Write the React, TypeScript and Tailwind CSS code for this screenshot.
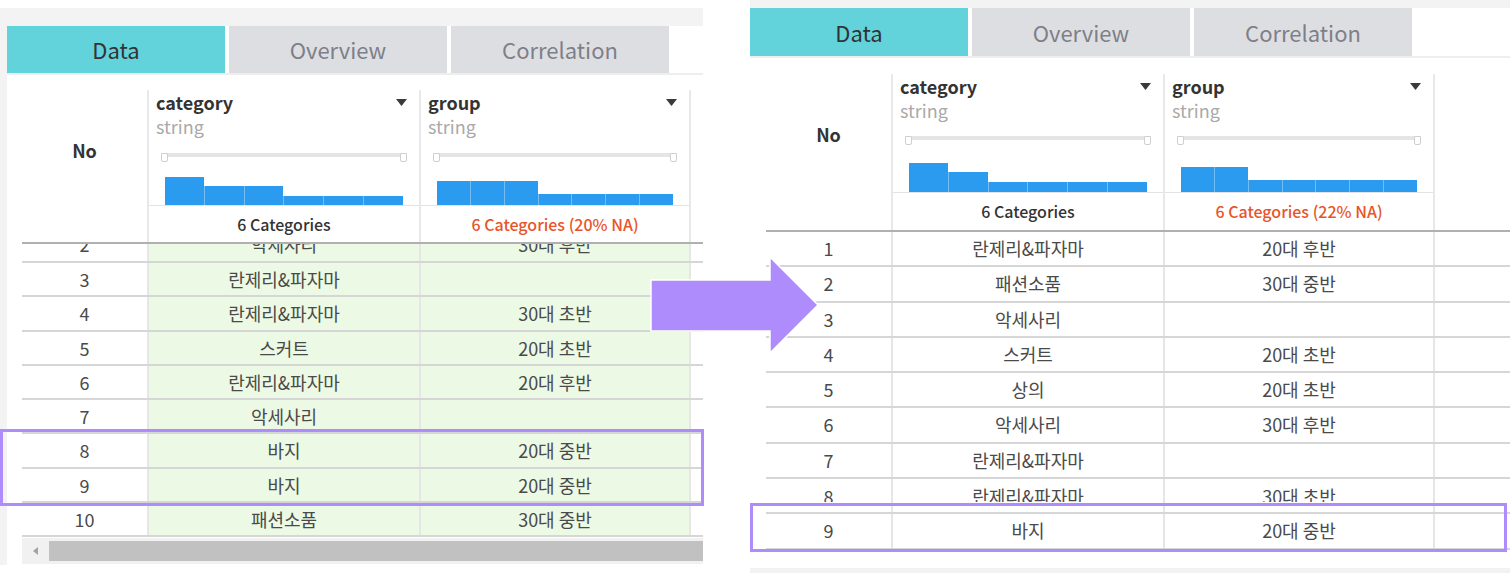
type Row = { no: number; cat: string; grp: string; clip?: 'top' | 'bottom' };

type Cfg = {
  headerH: string;
  colsTop: string;
  colsH: string;
  noPad: string;
  sliderMt: string;
  histH: string;
  statH: string;
  rowH: string;
  lead: string;
};

const leftCfg: Cfg = {
  headerH: 'h-[169px]',
  colsTop: 'mt-[15px]',
  colsH: 'h-[152px]',
  noPad: 'pt-[63px]',
  sliderMt: 'mt-[15px]',
  histH: 'h-[43px]',
  statH: 'h-[36px]',
  rowH: 'h-[34.25px]',
  lead: 'leading-[32px]',
};

const rightCfg: Cfg = {
  headerH: 'h-[174px]',
  colsTop: 'mt-[16px]',
  colsH: 'h-[156px]',
  noPad: 'pt-[64px]',
  sliderMt: 'mt-[14px]',
  histH: 'h-[47px]',
  statH: 'h-[37px]',
  rowH: 'h-[35.3px]',
  lead: 'leading-[33px]',
};

const leftRows: Row[] = [
  { no: 2, cat: '악세사리', grp: '30대 후반', clip: 'top' },
  { no: 3, cat: '란제리&파자마', grp: '' },
  { no: 4, cat: '란제리&파자마', grp: '30대 초반' },
  { no: 5, cat: '스커트', grp: '20대 초반' },
  { no: 6, cat: '란제리&파자마', grp: '20대 후반' },
  { no: 7, cat: '악세사리', grp: '' },
  { no: 8, cat: '바지', grp: '20대 중반' },
  { no: 9, cat: '바지', grp: '20대 중반' },
  { no: 10, cat: '패션소품', grp: '30대 중반' },
];

const rightRows: Row[] = [
  { no: 1, cat: '란제리&파자마', grp: '20대 후반' },
  { no: 2, cat: '패션소품', grp: '30대 중반' },
  { no: 3, cat: '악세사리', grp: '' },
  { no: 4, cat: '스커트', grp: '20대 초반' },
  { no: 5, cat: '상의', grp: '20대 초반' },
  { no: 6, cat: '악세사리', grp: '30대 후반' },
  { no: 7, cat: '란제리&파자마', grp: '' },
  { no: 8, cat: '란제리&파자마', grp: '30대 초반', clip: 'bottom' },
  { no: 9, cat: '바지', grp: '20대 중반' },
];

function Caret() {
  return (
    <svg width="11" height="7" viewBox="0 0 11 7">
      <path d="M0 0h11L5.5 7z" fill="#3a3a3a" />
    </svg>
  );
}

function Slider() {
  return (
    <div className="flex items-start px-[12px]">
      <div className="w-[7px] h-[9px] rounded-b-[2px] border border-[#cfcfcf] bg-white" />
      <div className="flex-1 h-[4px] bg-[#e5e5e5]" />
      <div className="w-[7px] h-[9px] rounded-b-[2px] border border-[#cfcfcf] bg-white" />
    </div>
  );
}

function Histogram({ heights, h }: { heights: number[]; h: string }) {
  return (
    <div className={`flex items-end px-[16px] ${h}`}>
      {heights.map((v, i) => (
        <div
          key={i}
          className={`flex-1 bg-[#2b9bef] ${i > 0 ? 'border-l border-[#72bdf4]' : ''}`}
          style={{ height: v }}
        />
      ))}
    </div>
  );
}

function ColHeader({ name, stat, na, heights, cfg, last }: { name: string; stat: string; na?: boolean; heights: number[]; cfg: Cfg; last?: boolean }) {
  return (
    <div className={`w-[272px] flex flex-col border-l-2 border-[#e8e8e8] ${last ? 'border-r-2' : ''} ${cfg.colsTop} ${cfg.colsH}`}>
      <div className="flex items-center justify-between pl-[7px] pr-[12px] h-[24px] text-[18px] font-bold text-[#333]">
        <span>{name}</span>
        <Caret />
      </div>
      <div className="pl-[7px] h-[24px] leading-[24px] text-[18px] text-[#a9a9a9]">string</div>
      <div className={cfg.sliderMt}>
        <Slider />
      </div>
      <Histogram heights={heights} h={cfg.histH} />
      <div className={`border-t border-[#e3e3e3] flex items-center justify-center text-[16px] font-medium ${cfg.statH} ${na ? 'text-[#e8552a]' : 'text-[#333]'}`}>
        {stat}
      </div>
    </div>
  );
}

function BodyRow({ row, cfg, green }: { row: Row; cfg: Cfg; green: boolean }) {
  const bg = green ? 'bg-[#ecf9e4]' : 'bg-white';
  const text = (t: string) => {
    if (row.clip === 'top') return <div className="-mt-[17px] leading-[34px]">{t}</div>;
    if (row.clip === 'bottom') return <div className="h-[23px] overflow-hidden leading-[35px]">{t}</div>;
    return <div className={cfg.lead}>{t}</div>;
  };
  const h = row.clip === 'top' ? 'h-[19px]' : cfg.rowH;
  return (
    <div className={`flex border-b-2 border-[#d6d6d6] text-[18px] text-[#4a4a4a] ${h}`}>
      <div className="w-[125px] overflow-hidden text-center">{text(String(row.no))}</div>
      <div className={`w-[272px] overflow-hidden text-center border-l-2 border-[#e6e6e6] ${bg}`}>{text(row.cat)}</div>
      <div className={`w-[272px] overflow-hidden text-center border-l-2 border-r-2 border-[#e6e6e6] ${bg}`}>{text(row.grp)}</div>
      <div className="flex-1" />
    </div>
  );
}

function Tabs({ h }: { h: string }) {
  return (
    <div className={`flex gap-[4px] border-b-2 border-[#eeeeee] text-[22px] ${h}`}>
      <div className="w-[218px] bg-[#62d2db] flex items-center justify-center text-[#333]">Data</div>
      <div className="w-[218px] bg-[#dddee2] flex items-center justify-center text-[#7e7f88]">Overview</div>
      <div className="w-[218px] bg-[#dddee2] flex items-center justify-center text-[#7e7f88]">Correlation</div>
    </div>
  );
}

function Table({ cfg, rows, green, catBars, grpBars, na }: { cfg: Cfg; rows: Row[]; green: boolean; catBars: number[]; grpBars: number[]; na: string }) {
  return (
    <div>
      <div className={`flex items-start border-b-2 border-[#b0b0b0] ${cfg.headerH}`}>
        <div className={`w-[125px] text-center text-[18px] font-bold text-[#333] leading-[24px] ${cfg.noPad}`}>No</div>
        <ColHeader name="category" stat="6 Categories" heights={catBars} cfg={cfg} />
        <ColHeader name="group" stat={na} na heights={grpBars} cfg={cfg} last />
      </div>
      {rows.map((r) => (
        <BodyRow key={r.no} row={r} cfg={cfg} green={green} />
      ))}
    </div>
  );
}

export default function App() {
  return (
    <div className="relative w-[1510px] h-[573px] overflow-hidden bg-white flex items-start font-['Noto_Sans_CJK_KR','Noto_Sans',sans-serif]">
      {/* before */}
      <div className="w-[703px] pt-[8px]">
        <div className="bg-[#f3f3f3] pt-[18px] pl-[7px] h-[557px]">
          <div className="bg-white h-full">
            <Tabs h="h-[49px]" />
            <div className="pl-[15px]">
              <Table
                cfg={leftCfg}
                rows={leftRows}
                green
                catBars={[28, 19, 19, 9, 9, 9]}
                grpBars={[24, 24, 24, 11, 11, 11, 11]}
                na="6 Categories (20% NA)"
              />
              <div className="mt-[1px] h-[26px] bg-[#f1f1f1] flex items-center">
                <div className="w-[27px] flex justify-center">
                  <svg width="5" height="8" viewBox="0 0 5 8">
                    <path d="M5 0v8L0 4z" fill="#a3a3a3" />
                  </svg>
                </div>
                <div className="flex-1 h-[20px] bg-[#c1c1c1]" />
              </div>
            </div>
          </div>
        </div>
      </div>

      {/* after */}
      <div className="w-[760px] ml-[47px]">
        <div className="h-[8px] bg-[#f3f3f3]" />
        <Tabs h="h-[50px]" />
        <div className="pl-[16px]">
          <Table
            cfg={rightCfg}
            rows={rightRows}
            green={false}
            catBars={[29, 20, 10, 10, 10, 10]}
            grpBars={[25, 25, 12, 12, 12, 12, 12]}
            na="6 Categories (22% NA)"
          />
        </div>
        <div className="mt-[18px] h-[5px] bg-[#f2f2f2]" />
      </div>

      {/* highlights */}
      <div className="absolute left-[0px] top-[429px] w-[704px] h-[77px] border-[3px] border-[#ae8cfb]" />
      <div className="absolute left-[750px] top-[503px] w-[757px] h-[49px] border-[3px] border-[#ae8cfb]" />
      <svg className="absolute left-[649px] top-[255px]" width="172" height="100" viewBox="0 0 172 100">
        <path d="M2 25H121V2L169 50L121 98V76H2Z" fill="#ae8cfb" stroke="#ffffff" strokeWidth="1.5" />
      </svg>
    </div>
  );
}
